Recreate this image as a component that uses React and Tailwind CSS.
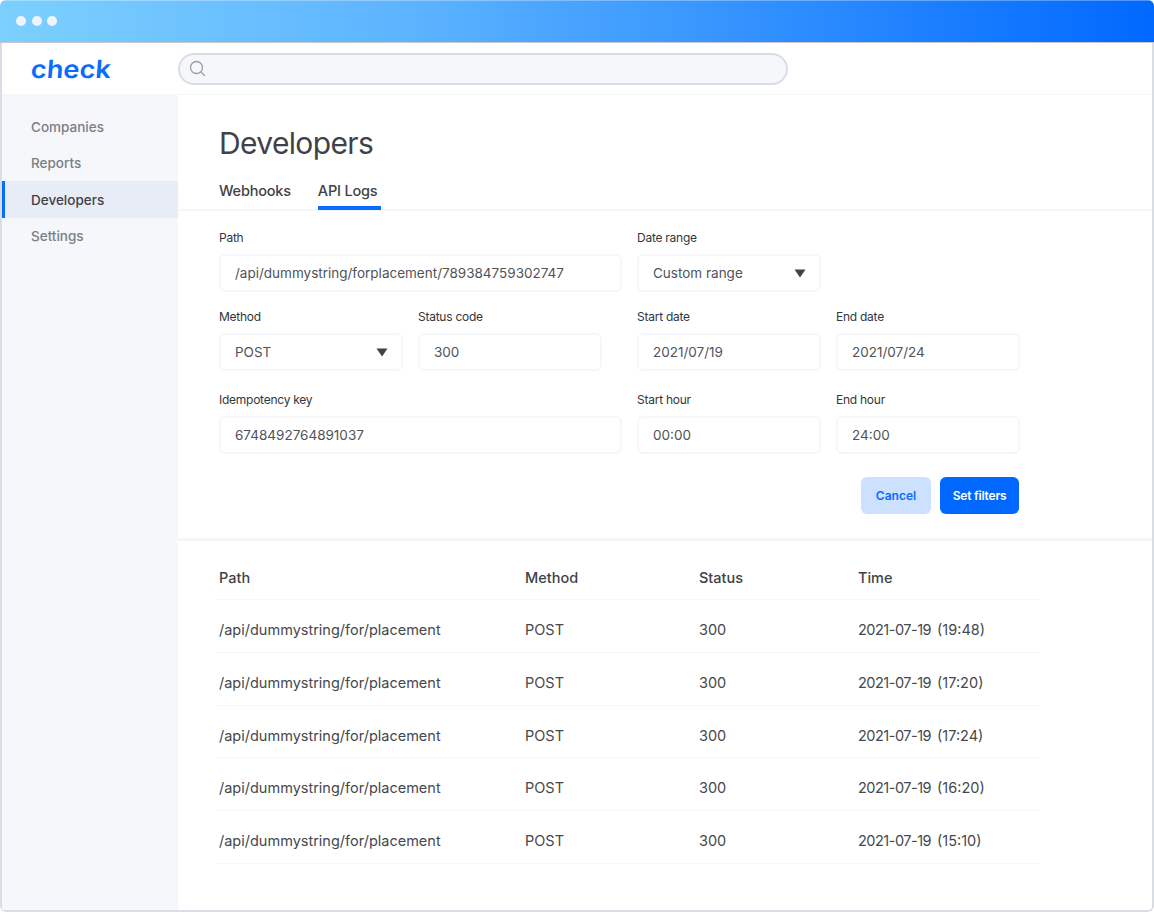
import React from "react";

const Label = ({ children }) => (
  <div className="mb-[8px] h-[16px] text-[12px] leading-[16px] tracking-[-0.25px] text-[#33363b]">{children}</div>
);

const Field = ({ label, value, select, className = "" }) => (
  <div className={className}>
    <Label>{label}</Label>
    <div className="flex h-[38px] items-center justify-between rounded-[6px] border-2 border-[#f5f7fb] bg-white pl-[14px] pr-[13px] text-[13.5px] text-[#505359]">
      <span>{value}</span>
      {select && (
        <svg width="12" height="9" viewBox="0 0 12 9">
          <path d="M0.5 0.5H11.5L6 8.5Z" fill="#3f4247" />
        </svg>
      )}
    </div>
  </div>
);

const rows = ["19:48", "17:20", "17:24", "16:20", "15:10"];

export default function App() {
  return (
    <div className="h-[912px] w-[1154px] overflow-hidden bg-white font-['Inter',sans-serif]">
      <div className="flex h-[912px] flex-col overflow-hidden rounded-[6px]">
        <div className="flex h-[43px] shrink-0 items-center gap-[5.5px] border-t border-b border-t-white/30 border-b-[#c4c8cc] bg-[linear-gradient(90deg,#7cd0ff_0%,#5db4ff_35%,#2c8cff_70%,#0068ff_100%)] pb-[1px] pl-[16px]">
          <span className="h-[10px] w-[10px] rounded-full bg-[#eef4fb]" />
          <span className="h-[10px] w-[10px] rounded-full bg-[#eef4fb]" />
          <span className="h-[10px] w-[10px] rounded-full bg-[#eef4fb]" />
        </div>

        <div className="flex min-h-0 flex-1 flex-col rounded-b-[6px] border-x-2 border-b-2 border-[#d9dde5]">
          <div className="flex h-[52px] shrink-0 items-center border-b border-[#f5f6f8] bg-white">
            <div className="w-[176px] pl-[29px]">
              <span className="inline-block origin-left -skew-x-[4deg] scale-x-[1.09] text-[25px] font-semibold leading-[30px] text-[#0a6cff]">check</span>
            </div>
            <div className="flex h-[32px] w-[610px] items-center rounded-full border-2 border-[#d9dde5] bg-[#f5f7fb] pl-[9px]">
              <svg width="17" height="17" viewBox="0 0 17 17" fill="none" stroke="#9a9fa6" strokeWidth="1.3">
                <circle cx="7.5" cy="7.5" r="6" />
                <path d="M12 12L15.5 15.5" strokeLinecap="round" />
              </svg>
            </div>
          </div>

          <div className="flex min-h-0 flex-1">
            <aside className="w-[176px] shrink-0 bg-[#f5f7fb] pt-[13px] text-[13.5px] font-medium text-[#7b7f85]">
              <div className="flex h-[36.5px] items-center pl-[29px] pt-[1px]">Companies</div>
              <div className="flex h-[36.5px] items-center pl-[29px] pt-[1px]">Reports</div>
              <div className="flex h-[36.5px] items-center border-l-[3px] border-[#0a6cff] bg-[#e8ecf6] pl-[26px] pt-[1px] text-[#3f4247]">Developers</div>
              <div className="flex h-[36.5px] items-center pl-[29px] pt-[1px]">Settings</div>
            </aside>

            <main className="min-w-0 flex-1">
              <div className="border-b-2 border-[#f5f6f8]">
                <h1 className="pl-[41px] pt-[30px] text-[30px] font-normal leading-[36px] tracking-[-0.65px] text-[#3f4247]">Developers</h1>
                <div className="-mb-[1px] mt-[19px] flex gap-[27px] pl-[41px] text-[14.5px] font-medium tracking-[-0.2px] text-[#3f4247]">
                  <div className="h-[30px] leading-[22px]">Webhooks</div>
                  <div className="h-[30px] w-[63px] border-b-[4px] border-[#0a6cff] leading-[22px]">API Logs</div>
                </div>
              </div>

              <div className="border-b-[3px] border-[#f5f6f8] pb-[24px] pl-[41px] pt-[19px]">
                <div className="flex">
                  <Field label="Path" value="/api/dummystring/forplacement/789384759302747" className="w-[403px]" />
                  <Field label="Date range" value="Custom range" select className="ml-[15px] w-[184px]" />
                </div>
                <div className="mt-[17px] flex">
                  <Field label="Method" value="POST" select className="w-[184px]" />
                  <Field label="Status code" value="300" className="ml-[15px] w-[184px]" />
                  <Field label="Start date" value="2021/07/19" className="ml-[35px] w-[184px]" />
                  <Field label="End date" value="2021/07/24" className="ml-[15px] w-[184px]" />
                </div>
                <div className="mt-[21px] flex">
                  <Field label="Idempotency key" value="6748492764891037" className="w-[403px]" />
                  <Field label="Start hour" value="00:00" className="ml-[15px] w-[184px]" />
                  <Field label="End hour" value="24:00" className="ml-[15px] w-[184px]" />
                </div>
                <div className="mt-[23px] flex w-[800px] justify-end gap-[9px] text-[12px] font-semibold">
                  <button className="h-[37px] w-[70px] rounded-[6px] bg-[#cce0ff] text-[#0a6cff]">Cancel</button>
                  <button className="h-[37px] w-[79px] rounded-[6px] bg-[#0068ff] tracking-[-0.2px] text-white">Set filters</button>
                </div>
              </div>

              <div className="ml-[39px] mt-[20px] w-[823px] text-[#45484d]">
                <div className="flex h-[39px] items-center border-b border-[#f5f6f8] pb-[5px] pl-[2px] text-[14.5px] font-medium text-[#3f4247]">
                  <div className="w-[306px]">Path</div>
                  <div className="w-[174px]">Method</div>
                  <div className="w-[159px]">Status</div>
                  <div>Time</div>
                </div>
                {rows.map((t) => (
                  <div key={t} className="flex h-[52.75px] items-center border-b border-[#f5f6f8] pl-[2px] pt-[8px] text-[14.5px]">
                    <div className="w-[306px]">/api/dummystring/for/placement</div>
                    <div className="w-[174px]">POST</div>
                    <div className="w-[159px]">300</div>
                    <div className="flex gap-[6px]">
                      <span className="tracking-[-0.5px]">2021-07-19</span>
                      <span>({t})</span>
                    </div>
                  </div>
                ))}
              </div>
            </main>
          </div>
        </div>
      </div>
    </div>
  );
}
